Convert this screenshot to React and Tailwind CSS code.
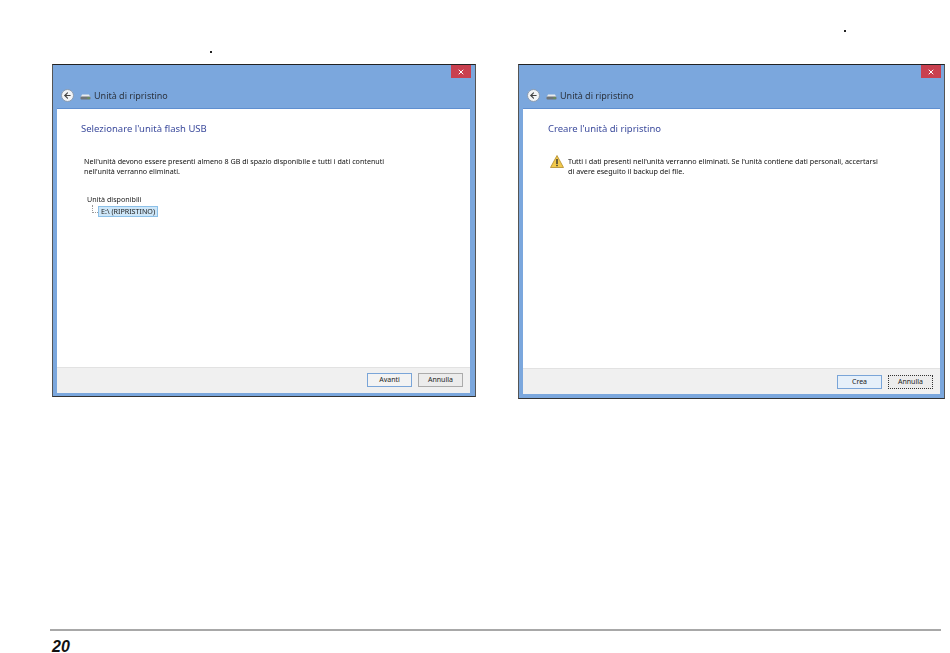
import { X, ArrowLeft } from "lucide-react";

const font = "font-['Noto_Sans',sans-serif]";

const Btn = ({ children, className = "" }) => (
  <div
    className={`w-[45px] h-[14px] flex items-center justify-center text-[7px] text-[#222] ${className}`}
  >
    {children}
  </div>
);

const DriveIcon = () => (
  <svg width="11" height="7" viewBox="0 0 11 7">
    <path d="M2 1.5h7l1.5 3H.5z" fill="#e8ebee" />
    <rect x="0.5" y="3.5" width="10" height="3" rx="1" fill="#6f7478" />
    <rect x="7.5" y="4.5" width="2" height="1" fill="#5fae3c" />
  </svg>
);

const Win = ({ size, inner, footer, closeRight, children, buttons }) => (
  <div
    className={`flex flex-col shrink-0 bg-[#7ba7dd] border border-t-[#222] border-l-[#555] border-r-[#555] border-b-[#333] ${size}`}
  >
    <div className={`flex justify-end ${closeRight}`}>
      <div className="w-[20px] h-[13px] bg-[#c9404f] flex items-center justify-center">
        <X size={8} strokeWidth={3} className="text-white" />
      </div>
    </div>
    <div className="h-[30px] flex items-center pl-[8px] pt-[5px]">
      <div className="w-[13px] h-[13px] rounded-full bg-[#f2f4f6] border border-[#8a9bb0] flex items-center justify-center">
        <ArrowLeft size={9} strokeWidth={3} className="text-[#444]" />
      </div>
      <div className="ml-[6px] mr-[3px] flex items-center pt-[2px]">
        <DriveIcon />
      </div>
      <span className="text-[9px] text-[#2c3440] blur-[0.3px]">
        Unità di ripristino
      </span>
    </div>
    <div className={`flex-1 flex flex-col min-h-0 ${inner}`}>
      <div className="flex-1 bg-white border-t border-[#5f8fd0] min-h-0 blur-[0.3px]">
        {children}
      </div>
      <div
        className={`h-[26px] bg-[#f0f0f0] border-t border-[#e2e2e2] flex items-start justify-end gap-[6px] pr-[7px] ${footer}`}
      >
        {buttons}
      </div>
    </div>
  </div>
);

export default function App() {
  return (
    <div className={`w-[950px] h-[653px] bg-white flex flex-col ${font}`}>
      <div className="flex pl-[52px] gap-[42px] h-[400px] items-start">
        <div className="flex flex-col">
          <div className="h-[64px] flex items-end pl-[158px] pb-[11px]">
            <div className="w-[2px] h-[2px] bg-[#222]" />
          </div>
          <Win
            size="w-[424px] h-[333px]"
            inner="ml-[4px] mr-[5px] mb-[3px]"
            footer="pt-[5px]"
            closeRight="pr-[4px]"
            buttons={
              <>
                <Btn className="border border-[#7aa5d8] bg-[#f3f3f3]">
                  Avanti
                </Btn>
                <Btn className="border border-[#ababab] bg-[#ececec]">
                  Annulla
                </Btn>
              </>
            }
          >
            <div className="pl-[24px] pt-[14px]">
              <div className="text-[9.5px] leading-[12px] text-[#3b4a9c]">
                Selezionare l'unità flash USB
              </div>
              <div className="mt-[21px] pl-[3px] text-[7.15px] leading-[10px] text-[#111]">
                <div>
                  Nell'unità devono essere presenti almeno 8 GB di spazio
                  disponibile e tutti i dati contenuti
                </div>
                <div>nell'unità verranno eliminati.</div>
              </div>
              <div className="mt-[18px] pl-[6px] text-[7.15px] leading-[10px] text-[#222]">
                Unità disponibili
              </div>
              <div className="flex items-center pl-[11px] mt-[1px]">
                <div className="w-[6px] h-[8px] mb-[5px] border-l border-b border-dotted border-[#999]" />
                <div className="h-[11px] px-[2px] flex items-center bg-[#cde6f8] border border-[#8cc0e8] text-[7.15px] text-[#222]">
                  E:\ (RIPRISTINO)
                </div>
              </div>
            </div>
          </Win>
        </div>
        <div className="flex flex-col">
          <div className="h-[64px] flex items-end pl-[326px] pb-[32px]">
            <div className="w-[2px] h-[2px] bg-[#222]" />
          </div>
          <Win
            size="w-[427px] h-[335px]"
            inner="mx-[4px] mb-[4px]"
            footer="pt-[6px]"
            closeRight="pr-[3px]"
            buttons={
              <>
                <Btn className="border border-[#7aa5d8] bg-[#e6f0fa]">Crea</Btn>
                <Btn className="border border-dotted border-[#333] bg-[#ececec]">
                  Annulla
                </Btn>
              </>
            }
          >
            <div className="pl-[25px] pt-[14px]">
              <div className="text-[9.5px] leading-[12px] text-[#3b4a9c]">
                Creare l'unità di ripristino
              </div>
              <div className="mt-[21px] flex items-start">
                <svg
                  width="14"
                  height="13"
                  viewBox="0 0 14 13"
                  className="ml-[2px] mr-[4px] -mt-[1px] shrink-0"
                >
                  <path
                    d="M7 .5 13.5 12.5H.5z"
                    fill="#f2c94c"
                    stroke="#b08a2a"
                    strokeWidth="0.8"
                    strokeLinejoin="round"
                  />
                  <rect x="6.3" y="4" width="1.4" height="5" fill="#333" />
                  <rect x="6.3" y="9.8" width="1.4" height="1.4" fill="#333" />
                </svg>
                <div className="text-[7.2px] leading-[10px] text-[#111]">
                  <div>
                    Tutti i dati presenti nell'unità verranno eliminati. Se
                    l'unità contiene dati personali, accertarsi
                  </div>
                  <div>di avere eseguito il backup dei file.</div>
                </div>
              </div>
            </div>
          </Win>
        </div>
      </div>
      <div className="mt-auto ml-[50px] mr-[9px] border-t-2 border-[#a8a8a8] h-[24px] pt-[10px] pl-[2px]">
        <span className="block font-['Liberation_Sans',sans-serif] font-bold italic text-[16px] leading-[12px] text-[#111]">
          20
        </span>
      </div>
    </div>
  );
}
